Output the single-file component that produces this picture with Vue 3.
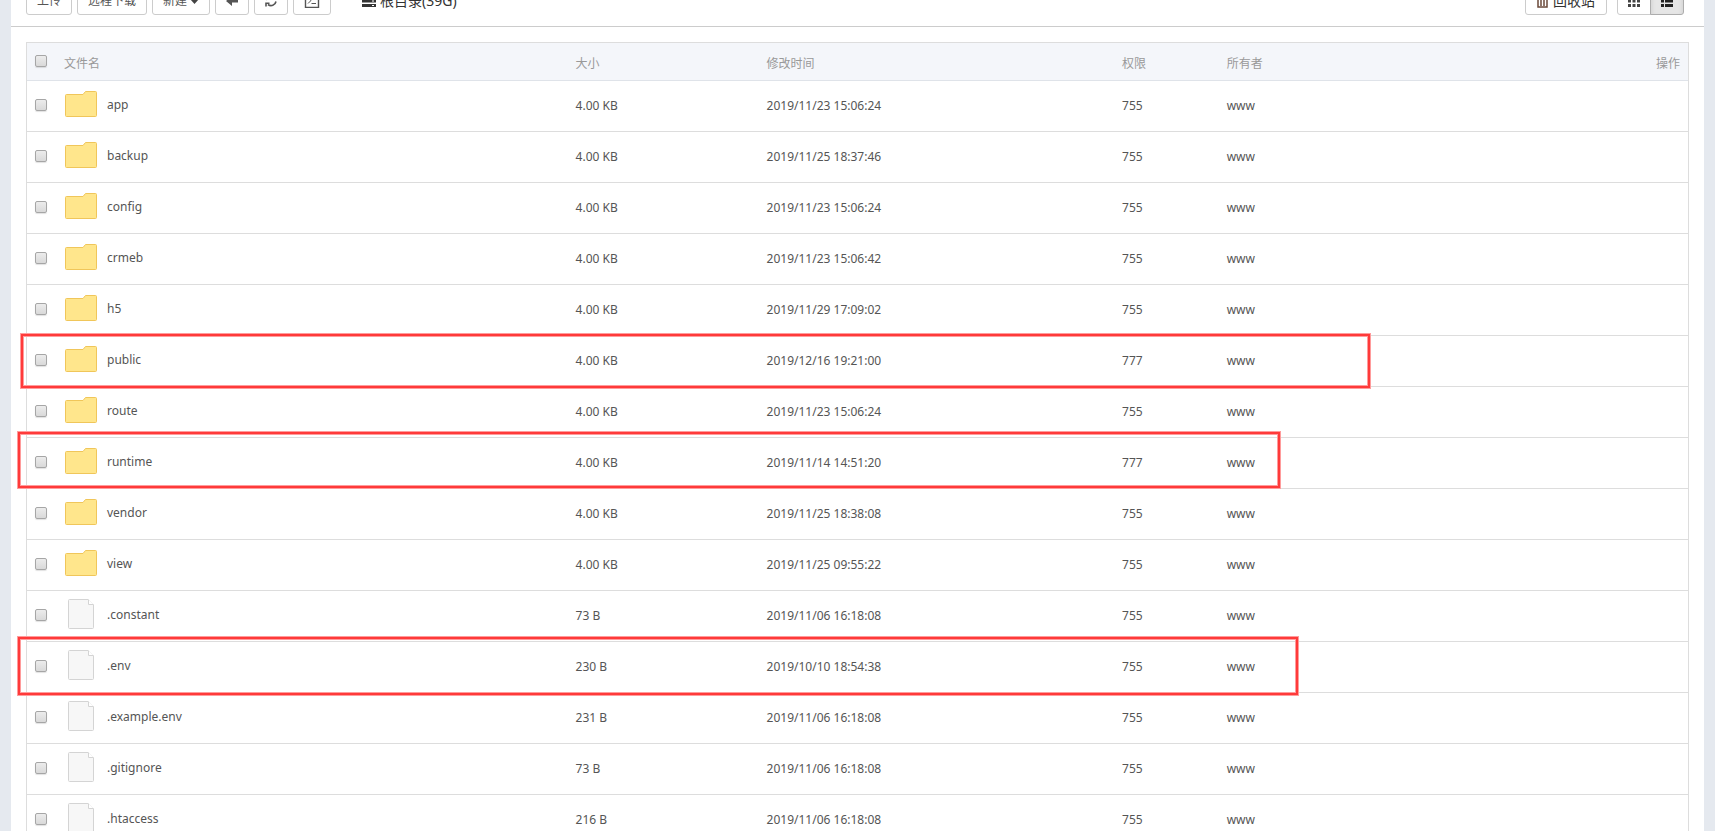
<script setup>
const files = [
  { name: 'app', size: '4.00 KB', time: '2019/11/23 15:06:24', mode: '755', dir: true },
  { name: 'backup', size: '4.00 KB', time: '2019/11/25 18:37:46', mode: '755', dir: true },
  { name: 'config', size: '4.00 KB', time: '2019/11/23 15:06:24', mode: '755', dir: true },
  { name: 'crmeb', size: '4.00 KB', time: '2019/11/23 15:06:42', mode: '755', dir: true },
  { name: 'h5', size: '4.00 KB', time: '2019/11/29 17:09:02', mode: '755', dir: true },
  { name: 'public', size: '4.00 KB', time: '2019/12/16 19:21:00', mode: '777', dir: true },
  { name: 'route', size: '4.00 KB', time: '2019/11/23 15:06:24', mode: '755', dir: true },
  { name: 'runtime', size: '4.00 KB', time: '2019/11/14 14:51:20', mode: '777', dir: true },
  { name: 'vendor', size: '4.00 KB', time: '2019/11/25 18:38:08', mode: '755', dir: true },
  { name: 'view', size: '4.00 KB', time: '2019/11/25 09:55:22', mode: '755', dir: true },
  { name: '.constant', size: '73 B', time: '2019/11/06 16:18:08', mode: '755' },
  { name: '.env', size: '230 B', time: '2019/10/10 18:54:38', mode: '755' },
  { name: '.example.env', size: '231 B', time: '2019/11/06 16:18:08', mode: '755' },
  { name: '.gitignore', size: '73 B', time: '2019/11/06 16:18:08', mode: '755' },
  { name: '.htaccess', size: '216 B', time: '2019/11/06 16:18:08', mode: '755' },
]
</script>

<template>
  <div class="page">
    <main class="panel">
      <header class="toolbar">
        <div class="group">
          <button class="btn">上传</button>
          <button class="btn">远程下载</button>
          <button class="btn">新建
            <svg width="9" height="5" viewBox="0 0 9 5"><path d="M0 0h9L4.500 5z" fill="#444" /></svg>
          </button>
          <button class="btn" aria-label="后退">
            <svg width="12" height="12" viewBox="0 0 12 12"><path d="M0 6l6-5v3.500h6v3H6V11z" fill="#555" /></svg>
          </button>
          <button class="btn" aria-label="刷新">
            <svg width="12" height="12" viewBox="0 0 12 12"><path d="M1 5a5 5 0 0 1 8.500-2.500M11 6.500a5 5 0 0 1-8 3M9.800.5v3H7M1 11.500V8.200h3.500" fill="none" stroke="#555" stroke-width="1.600" /></svg>
          </button>
          <button class="btn" aria-label="终端">
            <svg width="16" height="14" viewBox="0 0 16 14"><path d="M1.500.500h13v13h-13z" fill="none" stroke="#555" stroke-width="1.400" /><path d="M4 4l3 2.500L4 9.500M7.500 9.500H12" fill="none" stroke="#555" /></svg>
          </button>
          <a class="disk" href="#">
            <svg width="14" height="14" viewBox="0 0 14 14"><path d="M0 1h14v3H0zM0 5.500h14v3H0zM0 10h14v3H0z" fill="#333" /><path d="M10 11.500h2M10 7h2M10 2.500h2" stroke="#fff" /></svg>
            <span>根目录(39G)</span>
          </a>
        </div>
        <div class="group right">
          <button class="btn large">
            <svg width="11" height="14" viewBox="0 0 11 14"><path d="M0 3h11M3.500 3V1h4v2M1 3v10h9V3M4 5v7M7 5v7" fill="none" stroke="#6b4a3a" stroke-width="1.500" /></svg>
            <span>回收站</span>
          </button>
          <div class="views">
            <button class="btn view" aria-label="图标视图">
              <svg width="12" height="12" viewBox="0 0 12 12"><path d="M0 0h3v3H0zM4.500 0h3v3h-3zM9 0h3v3H9zM0 4.500h3v3H0zM4.500 4.500h3v3h-3zM9 4.500h3v3H9zM0 9h3v3H0zM4.500 9h3v3h-3zM9 9h3v3H9z" fill="#444" /></svg>
            </button>
            <button class="btn view active" aria-label="列表视图">
              <svg width="12" height="12" viewBox="0 0 12 12"><path d="M0 0h3v3H0zM4 0h8v3H4zM0 4.500h3v3H0zM4 4.500h8v3H4zM0 9h3v3H0zM4 9h8v3H4z" fill="#222" /></svg>
            </button>
          </div>
        </div>
      </header>

      <section class="listing">
        <table class="files">
          <thead>
            <tr>
              <th class="pick"><input type="checkbox" aria-label="全选"></th>
              <th class="name">文件名</th>
              <th class="size">大小</th>
              <th class="time">修改时间</th>
              <th class="mode">权限</th>
              <th class="owner">所有者</th>
              <th class="ops">操作</th>
            </tr>
          </thead>
          <tbody>
            <tr v-for="file in files" :key="file.name">
              <td class="pick"><input type="checkbox" :aria-label="file.name"></td>
              <td class="name">
                <div class="entry">
                  <svg v-if="file.dir" width="32" height="30" viewBox="0 0 32 30">
                    <path d="M.5 6.500q0-1 1-1h16.500l2.500-3H30.500q1 0 1 1v23q0 1-1 1h-29q-1 0-1-1z" fill="#ffe68c" stroke="#f0c65a" />
                  </svg>
                  <svg v-else width="32" height="30" viewBox="0 0 32 30">
                    <path d="M4.500.500h18.500l5.500 5.500v22.500q0 1-1 1h-23q-1 0-1-1v-27q0-1 1-1z" fill="#f7f7f7" stroke="#d4d4d4" />
                    <path d="M23.500.500v5h5" fill="#fff" stroke="#d4d4d4" />
                  </svg>
                  <span class="label">{{ file.name }}</span>
                </div>
              </td>
              <td>{{ file.size }}</td>
              <td>{{ file.time }}</td>
              <td>{{ file.mode }}</td>
              <td>www</td>
              <td></td>
            </tr>
          </tbody>
        </table>
        <div class="mark mark-public"></div>
        <div class="mark mark-runtime"></div>
        <div class="mark mark-env"></div>
      </section>
    </main>
  </div>
</template>

<style>
body {
  margin: 0;
}
</style>

<style scoped>
.page {
  box-sizing: border-box;
  height: 100vh;
  padding: 0 11px;
  overflow: hidden;
  background: #e5e9ef;
  color: #555;
  font: 12px/18px "Noto Sans", "Noto Sans CJK SC", sans-serif;
}

.panel {
  min-height: 100%;
  background: #fff;
}

.toolbar {
  box-sizing: border-box;
  display: flex;
  align-items: flex-end;
  justify-content: space-between;
  height: 27px;
  padding: 0 20px 11px 15px;
  overflow: hidden;
  border-bottom: 1px solid #ccc;
}

.group {
  display: flex;
  align-items: flex-end;
  gap: 5px;
}

.right {
  gap: 10px;
}

.btn {
  box-sizing: border-box;
  display: flex;
  align-items: center;
  justify-content: center;
  gap: 3px;
  height: 30px;
  padding: 2px 10px 0;
  border: 1px solid #ccc;
  border-radius: 3px;
  background: #fff;
  color: #555;
  font: inherit;
  white-space: nowrap;
}

.large {
  gap: 5px;
  padding: 2px 11px 0;
  color: #333;
  font-size: 14px;
}

.disk {
  box-sizing: border-box;
  display: flex;
  align-items: center;
  gap: 4px;
  height: 30px;
  margin-left: 26px;
  padding-top: 2px;
  color: #333;
  font-size: 14px;
  text-decoration: none;
}

.views {
  display: flex;
}

.view {
  width: 34px;
  border-radius: 3px 0 0 3px;
}

.active {
  margin-left: -1px;
  border-color: #adadad;
  border-radius: 0 3px 3px 0;
  background: #e6e6e6;
  box-shadow: inset 0 3px 5px rgba(0, 0, 0, 0.125);
}

.listing {
  position: relative;
  margin: 15px 15px 0;
}

.files {
  box-sizing: border-box;
  width: 100%;
  table-layout: fixed;
  border: 1px solid #ddd;
  border-spacing: 0;
}

th,
td {
  box-sizing: border-box;
  padding: 0 8px;
  border-bottom: 1px solid #ddd;
  text-align: left;
  vertical-align: middle;
}

th {
  height: 38px;
  padding-top: 4px;
  border-color: #dfe3e9;
  background: #f4f6fa;
  color: #999;
  font-weight: normal;
}

td {
  height: 51px;
}

th.pick {
  width: 29px;
  padding-top: 0;
  padding-bottom: 1px;
}

th.name {
  width: 30.8%;
}

th.size {
  width: 11.5%;
}

th.time {
  width: 21.4%;
}

th.mode {
  width: 6.3%;
}

th.ops {
  width: 100px;
  text-align: right;
}

input {
  box-sizing: border-box;
  display: block;
  width: 12px;
  height: 12px;
  margin: 0;
  border: 1px solid #a6a6a6;
  border-radius: 2px;
  appearance: none;
  background: linear-gradient(#ececec, #d9d9d9);
  box-shadow: 0 1px 1px rgba(0, 0, 0, 0.12);
}

td.pick {
  padding-bottom: 2px;
}

td.name {
  padding-bottom: 4px;
}

.entry {
  display: flex;
  align-items: center;
  gap: 10px;
  padding-left: 1px;
}

.label {
  padding-top: 2px;
}

.mark {
  position: absolute;
  box-sizing: border-box;
  border: 2px solid #ff3a3a;
  box-shadow: 0 0 0 1px #ff9c9c, inset 0 0 0 1px #ff9c9c;
  pointer-events: none;
}

.mark-public {
  top: 292px;
  left: -5px;
  width: 1349px;
  height: 54px;
}

.mark-runtime {
  top: 390px;
  left: -8px;
  width: 1262px;
  height: 56px;
}

.mark-env {
  top: 595px;
  left: -8px;
  width: 1280px;
  height: 58px;
}
</style>
